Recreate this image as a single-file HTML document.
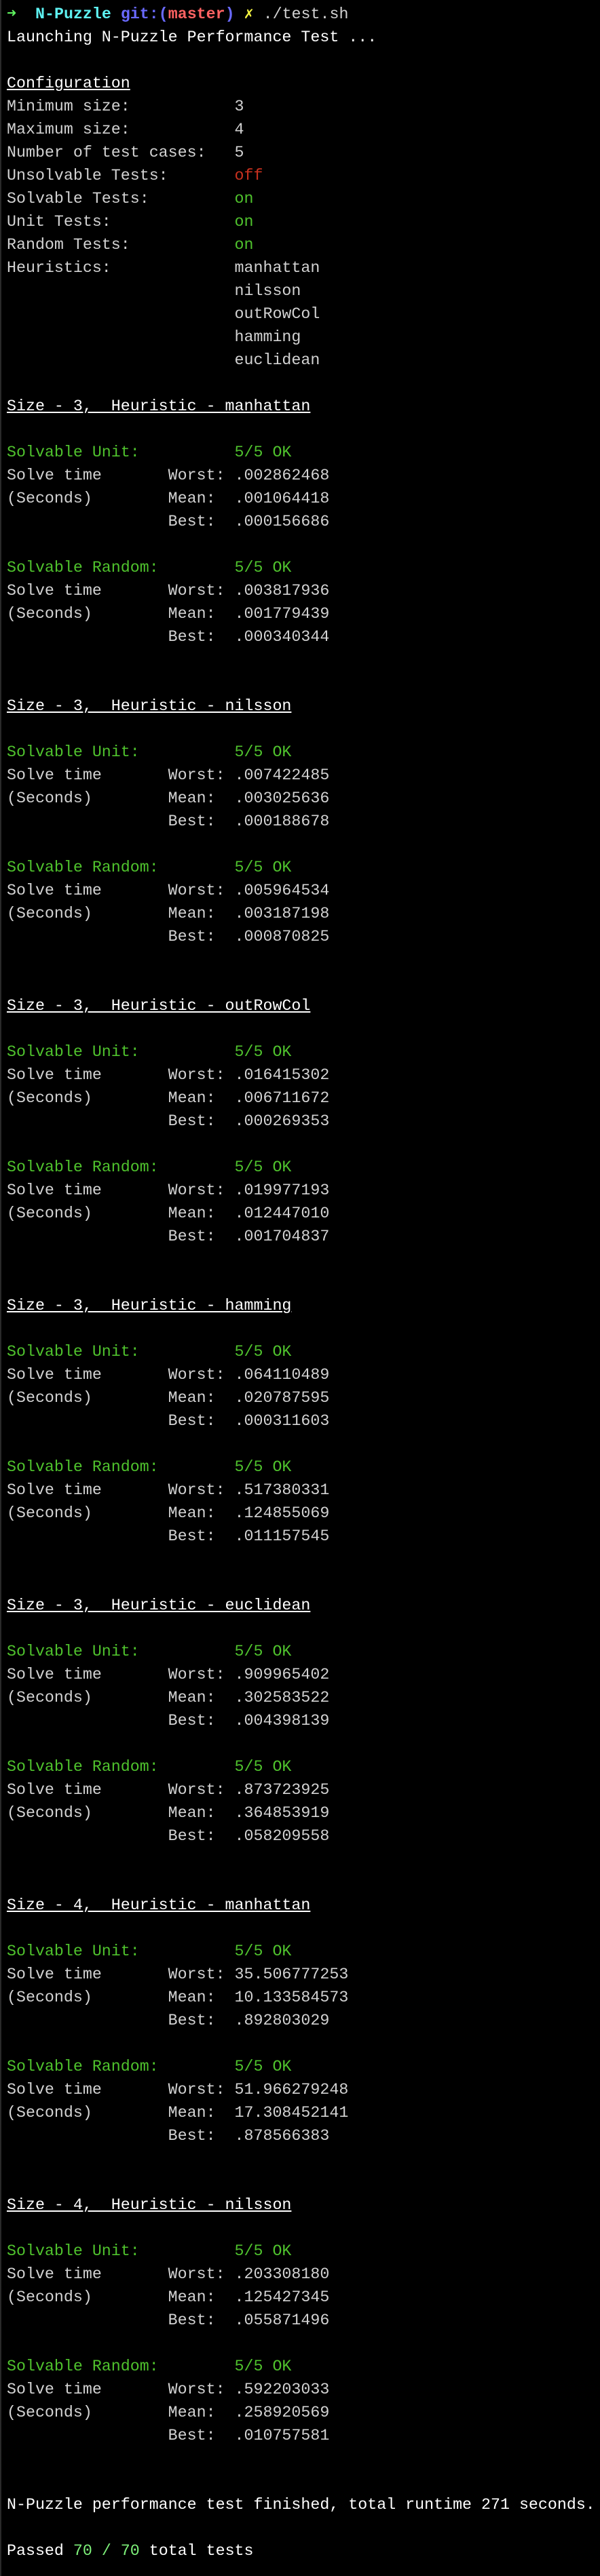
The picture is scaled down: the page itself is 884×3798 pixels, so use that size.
<!DOCTYPE html>
<html><head><meta charset="utf-8"><style>
html,body{margin:0;padding:0;background:#000;}
body{width:884px;height:3798px;overflow:hidden;border-left:2px solid #2a2a2a;box-sizing:border-box;}
pre{margin:0;padding:4px 0 0 8px;font-family:"Liberation Mono",monospace;font-size:23.3px;line-height:34px;color:#d2d2d2;}
.w{color:#fff}
.u{color:#fff;text-decoration:underline;}
.g{color:#4fc22d}
.r{color:#c9311f}
.bg{color:#7ef07a}
.ar{color:#5ff25f;font-weight:bold}
.cy{color:#5ef2f2;font-weight:bold}
.bl{color:#6a6aff;font-weight:bold}
.rd{color:#ff6262;font-weight:bold}
.ye{color:#f5f542;font-weight:bold}
</style></head><body><pre><span class="ar">➜</span>  <span class="cy">N-Puzzle</span> <span class="bl">git:(</span><span class="rd">master</span><span class="bl">)</span> <span class="ye">✗</span> ./test.sh
<span class="w">Launching N-Puzzle Performance Test ...</span>

<span class="u">Configuration</span>
Minimum size:           3
Maximum size:           4
Number of test cases:   5
Unsolvable Tests:       <span class="r">off</span>
Solvable Tests:         <span class="g">on</span>
Unit Tests:             <span class="g">on</span>
Random Tests:           <span class="g">on</span>
Heuristics:             manhattan
                        nilsson
                        outRowCol
                        hamming
                        euclidean

<span class="u">Size - 3,  Heuristic - manhattan</span>

<span class="g">Solvable Unit:          5/5 OK</span>
Solve time       Worst: .002862468
(Seconds)        Mean:  .001064418
                 Best:  .000156686

<span class="g">Solvable Random:        5/5 OK</span>
Solve time       Worst: .003817936
(Seconds)        Mean:  .001779439
                 Best:  .000340344


<span class="u">Size - 3,  Heuristic - nilsson</span>

<span class="g">Solvable Unit:          5/5 OK</span>
Solve time       Worst: .007422485
(Seconds)        Mean:  .003025636
                 Best:  .000188678

<span class="g">Solvable Random:        5/5 OK</span>
Solve time       Worst: .005964534
(Seconds)        Mean:  .003187198
                 Best:  .000870825


<span class="u">Size - 3,  Heuristic - outRowCol</span>

<span class="g">Solvable Unit:          5/5 OK</span>
Solve time       Worst: .016415302
(Seconds)        Mean:  .006711672
                 Best:  .000269353

<span class="g">Solvable Random:        5/5 OK</span>
Solve time       Worst: .019977193
(Seconds)        Mean:  .012447010
                 Best:  .001704837


<span class="u">Size - 3,  Heuristic - hamming</span>

<span class="g">Solvable Unit:          5/5 OK</span>
Solve time       Worst: .064110489
(Seconds)        Mean:  .020787595
                 Best:  .000311603

<span class="g">Solvable Random:        5/5 OK</span>
Solve time       Worst: .517380331
(Seconds)        Mean:  .124855069
                 Best:  .011157545


<span class="u">Size - 3,  Heuristic - euclidean</span>

<span class="g">Solvable Unit:          5/5 OK</span>
Solve time       Worst: .909965402
(Seconds)        Mean:  .302583522
                 Best:  .004398139

<span class="g">Solvable Random:        5/5 OK</span>
Solve time       Worst: .873723925
(Seconds)        Mean:  .364853919
                 Best:  .058209558


<span class="u">Size - 4,  Heuristic - manhattan</span>

<span class="g">Solvable Unit:          5/5 OK</span>
Solve time       Worst: 35.506777253
(Seconds)        Mean:  10.133584573
                 Best:  .892803029

<span class="g">Solvable Random:        5/5 OK</span>
Solve time       Worst: 51.966279248
(Seconds)        Mean:  17.308452141
                 Best:  .878566383


<span class="u">Size - 4,  Heuristic - nilsson</span>

<span class="g">Solvable Unit:          5/5 OK</span>
Solve time       Worst: .203308180
(Seconds)        Mean:  .125427345
                 Best:  .055871496

<span class="g">Solvable Random:        5/5 OK</span>
Solve time       Worst: .592203033
(Seconds)        Mean:  .258920569
                 Best:  .010757581


<span class="w">N-Puzzle performance test finished, total runtime 271 seconds.</span>

<span class="w">Passed <span class="bg">70 / 70</span> total tests</span>
</pre></body></html>
